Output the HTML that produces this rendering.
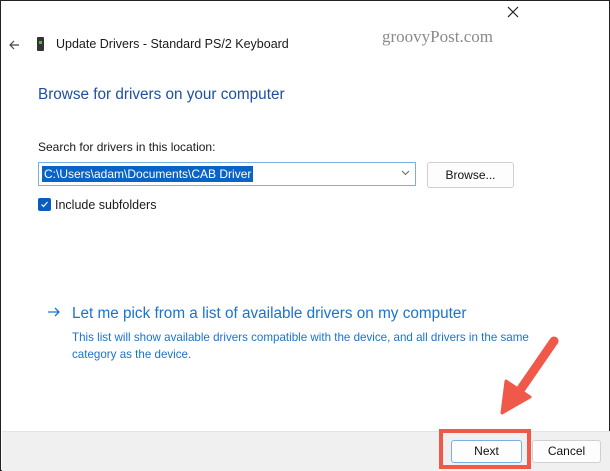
<!DOCTYPE html>
<html><head><meta charset="utf-8"><style>
*{margin:0;padding:0;box-sizing:border-box}
body{width:610px;height:471px;overflow:hidden;background:#fff;font-family:"Liberation Sans",sans-serif;position:relative}
.win{position:absolute;left:0;top:0;width:610px;height:471px;border:1px solid #222;background:#fff}
.abs{position:absolute;white-space:nowrap}
.footer{position:absolute;left:1px;top:430px;width:608px;height:40px;background:#f0f0f0;border-top:1px solid #e4e4e4}
.btn{position:absolute;height:23px;background:#fdfdfd;border:1px solid #d0d0d0;border-radius:3px;font-size:12px;color:#111;text-align:center;line-height:21px}
</style></head><body>
<div class="win">
<svg class="abs" style="left:505px;top:4px" width="14" height="14"><path d="M2 2L12 12M12 2L2 12" stroke="#222" stroke-width="1.2"/></svg>
<div class="abs" style="left:381px;top:26px;font-family:'Liberation Serif',serif;font-size:17px;color:#8a8a8a">groovyPost.com</div>
<svg class="abs" style="left:7px;top:38px" width="12" height="12"><path d="M11 6H2M6 2L2 6L6 10" stroke="#444" stroke-width="1.2" fill="none"/></svg>
<div class="abs" style="left:36px;top:36px;width:7px;height:14px;background:#333;border-radius:1px"></div>
<div class="abs" style="left:38px;top:40px;width:3px;height:3px;background:#3c3"></div>
<div class="abs" style="left:55px;top:36px;font-size:12.5px;color:#1a1a1a">Update Drivers - Standard PS/2 Keyboard</div>
<div class="abs" style="left:37px;top:85px;font-size:15.3px;color:#1e4fa3">Browse for drivers on your computer</div>
<div class="abs" style="left:37px;top:139px;font-size:12px;color:#1a1a1a">Search for drivers in this location:</div>
<div class="abs" style="left:37px;top:161px;width:378px;height:24px;border:1px solid #7ab0e0;background:#fff"></div>
<div class="abs" style="left:41px;top:165px;height:16px;background:#0a64c8;color:#fff;font-size:12px;line-height:16px;padding:0 2px">C:\Users\adam\Documents\CAB Driver</div>
<svg class="abs" style="left:400px;top:169px" width="9" height="6"><path d="M1 1L4.5 4.5L8 1" stroke="#666" fill="none"/></svg>
<div class="btn" style="left:426px;top:161px;width:87px;height:26px;line-height:24px">Browse...</div>
<div class="abs" style="left:37px;top:197px;width:13px;height:13px;background:#0a5cc0;border-radius:2px"></div>
<svg class="abs" style="left:39px;top:199px" width="9" height="9"><path d="M1.5 4.5L3.5 6.5L7.5 2" stroke="#fff" fill="none" stroke-width="1.2"/></svg>
<div class="abs" style="left:54px;top:197px;font-size:12.5px;color:#1a1a1a">Include subfolders</div>
<svg class="abs" style="left:46px;top:305px" width="14" height="12"><path d="M1 6H12M8 2L12 6L8 10" stroke="#1a73d0" stroke-width="1.3" fill="none"/></svg>
<div class="abs" style="left:71px;top:304px;font-size:15.3px;color:#1a73d0">Let me pick from a list of available drivers on my computer</div>
<div class="abs" style="left:71px;top:328px;font-size:11.6px;color:#1a73d0;line-height:17px">This list will show available drivers compatible with the device, and all drivers in the same<br>category as the device.</div>
<div class="footer"></div>
<div class="abs" style="left:438px;top:428px;width:92px;height:40px;border:4px solid #f0584a"></div>
<div class="btn" style="left:450px;top:439px;width:71px;border-color:#7ab0e0">Next</div>
<div class="btn" style="left:531px;top:439px;width:69px">Cancel</div>
<svg class="abs" style="left:495px;top:330px" width="70" height="90"><path d="M58 10L18 68" stroke="#f0584a" stroke-width="9" stroke-linecap="round"/><path d="M6 82L10 50L34 66Z" fill="#f0584a" stroke="#f0584a" stroke-width="3" stroke-linejoin="round"/></svg>
</div>
</body></html>
